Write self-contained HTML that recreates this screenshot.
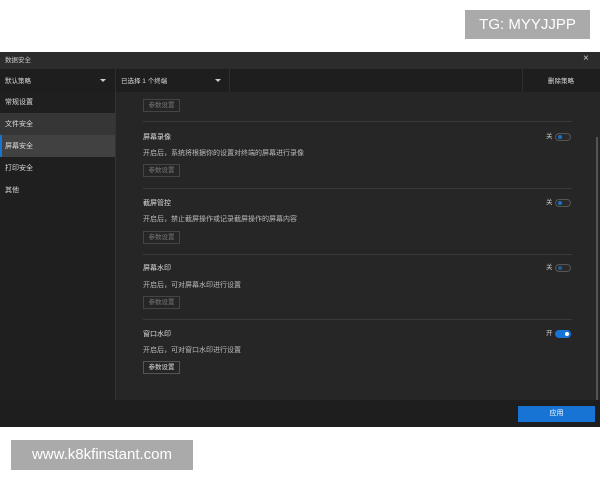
<!DOCTYPE html>
<html><head><meta charset="utf-8"><style>
*{margin:0;padding:0;box-sizing:border-box}
body{width:600px;height:480px;background:#fff;position:relative;overflow:hidden;font-family:"Liberation Sans","Noto Sans CJK SC",sans-serif;color:#ddd}
.abs{position:absolute}
.t{font-size:7px;white-space:nowrap;line-height:9px}
.btn{position:absolute;left:143px;width:37px;height:13px;border:1px solid #444;color:#777;font-size:6.5px;line-height:11px;text-align:center}
.sep{position:absolute;left:143px;width:429px;height:1px;background:#3a3a3a}
.tg{position:absolute;left:555px;width:16px;height:8px;border-radius:4px;border:1px solid #555;background:#2a2a2a}
.tg i{position:absolute;left:2px;top:1px;width:4px;height:4px;border-radius:2px;background:#1a6fc9}
.tg.on{background:#1773d4;border-color:#1773d4}
.tg.on i{left:9px;background:#fff}
.lab{position:absolute;left:546px;font-size:6.5px;line-height:8px;color:#ccc}
</style></head><body>
<div class="abs" style="left:465px;top:10px;width:125px;height:29px;background:#aaa;color:#fff;font-size:15px;line-height:29px;text-align:center">TG: MYYJJPP</div>
<div class="abs" style="left:0;top:52px;width:600px;height:375px;background:#262626"></div>
<div class="abs" style="left:0;top:52px;width:600px;height:17px;background:#2c2c2c"></div>
<div class="abs t" style="left:5px;top:56px;color:#ccc;font-size:6.5px">数据安全</div>
<div class="abs" style="left:583px;top:53px;font-size:10px;color:#ccc">×</div>
<div class="abs" style="left:0;top:69px;width:600px;height:23px;background:#1e1e1e"></div>
<div class="abs" style="left:115px;top:69px;width:1px;height:23px;background:#2e2e2e"></div>
<div class="abs" style="left:229px;top:69px;width:1px;height:23px;background:#2e2e2e"></div>
<div class="abs" style="left:522px;top:69px;width:1px;height:23px;background:#2e2e2e"></div>
<div class="abs t" style="left:5px;top:77px;font-size:6.5px">默认策略</div>
<div class="abs" style="left:100px;top:79px;border:3px solid transparent;border-top:3px solid #ccc"></div>
<div class="abs t" style="left:121px;top:77px;font-size:6.5px">已选择 1 个终端</div>
<div class="abs" style="left:215px;top:79px;border:3px solid transparent;border-top:3px solid #ccc"></div>
<div class="abs t" style="left:548px;top:77px;font-size:6.5px">删除策略</div>
<div class="abs" style="left:0;top:92px;width:115px;height:308px;background:#1f1f1f"></div>
<div class="abs" style="left:115px;top:92px;width:1px;height:308px;background:#333"></div>
<div class="abs" style="left:0;top:113px;width:115px;height:22px;background:#363636"></div>
<div class="abs" style="left:0;top:135px;width:115px;height:22px;background:#414141;border-left:2px solid #1773d4"></div>
<div class="abs t" style="left:5px;top:98px">常规设置</div>
<div class="abs t" style="left:5px;top:120px">文件安全</div>
<div class="abs t" style="left:5px;top:142px">屏幕安全</div>
<div class="abs t" style="left:5px;top:164px">打印安全</div>
<div class="abs t" style="left:5px;top:186px">其他</div>

<div class="btn" style="top:99px">参数设置</div>
<div class="sep" style="top:121px"></div>
<div class="abs t" style="left:143px;top:133px">屏幕录像</div>
<div class="lab" style="top:133px">关</div><div class="tg" style="top:133px"><i></i></div>
<div class="abs t" style="left:143px;top:149px;color:#bbb">开启后，系统将根据你的设置对终端的屏幕进行录像</div>
<div class="btn" style="top:164px">参数设置</div>
<div class="sep" style="top:188px"></div>
<div class="abs t" style="left:143px;top:199px">截屏管控</div>
<div class="lab" style="top:199px">关</div><div class="tg" style="top:199px"><i></i></div>
<div class="abs t" style="left:143px;top:215px;color:#bbb">开启后，禁止截屏操作或记录截屏操作的屏幕内容</div>
<div class="btn" style="top:231px">参数设置</div>
<div class="sep" style="top:254px"></div>
<div class="abs t" style="left:143px;top:264px">屏幕水印</div>
<div class="lab" style="top:264px">关</div><div class="tg" style="top:264px"><i style="background:#245a90"></i></div>
<div class="abs t" style="left:143px;top:281px;color:#bbb">开启后，可对屏幕水印进行设置</div>
<div class="btn" style="top:296px">参数设置</div>
<div class="sep" style="top:319px"></div>
<div class="abs t" style="left:143px;top:330px">窗口水印</div>
<div class="lab" style="top:330px">开</div><div class="tg on" style="top:330px"><i></i></div>
<div class="abs t" style="left:143px;top:346px;color:#bbb">开启后，可对窗口水印进行设置</div>
<div class="btn" style="top:361px;color:#ddd;border-color:#555">参数设置</div>

<div class="abs" style="left:596px;top:137px;width:2px;height:263px;background:#555"></div>
<div class="abs" style="left:0;top:400px;width:600px;height:27px;background:#1e1e1e"></div>
<div class="abs" style="left:518px;top:406px;width:77px;height:16px;background:#1773d4;color:#fff;font-size:7px;line-height:16px;text-align:center">应用</div>
<div class="abs" style="left:11px;top:440px;width:182px;height:30px;background:#aaa;color:#fff;font-size:15px;line-height:30px;text-align:center">www.k8kfinstant.com</div>
</body></html>
